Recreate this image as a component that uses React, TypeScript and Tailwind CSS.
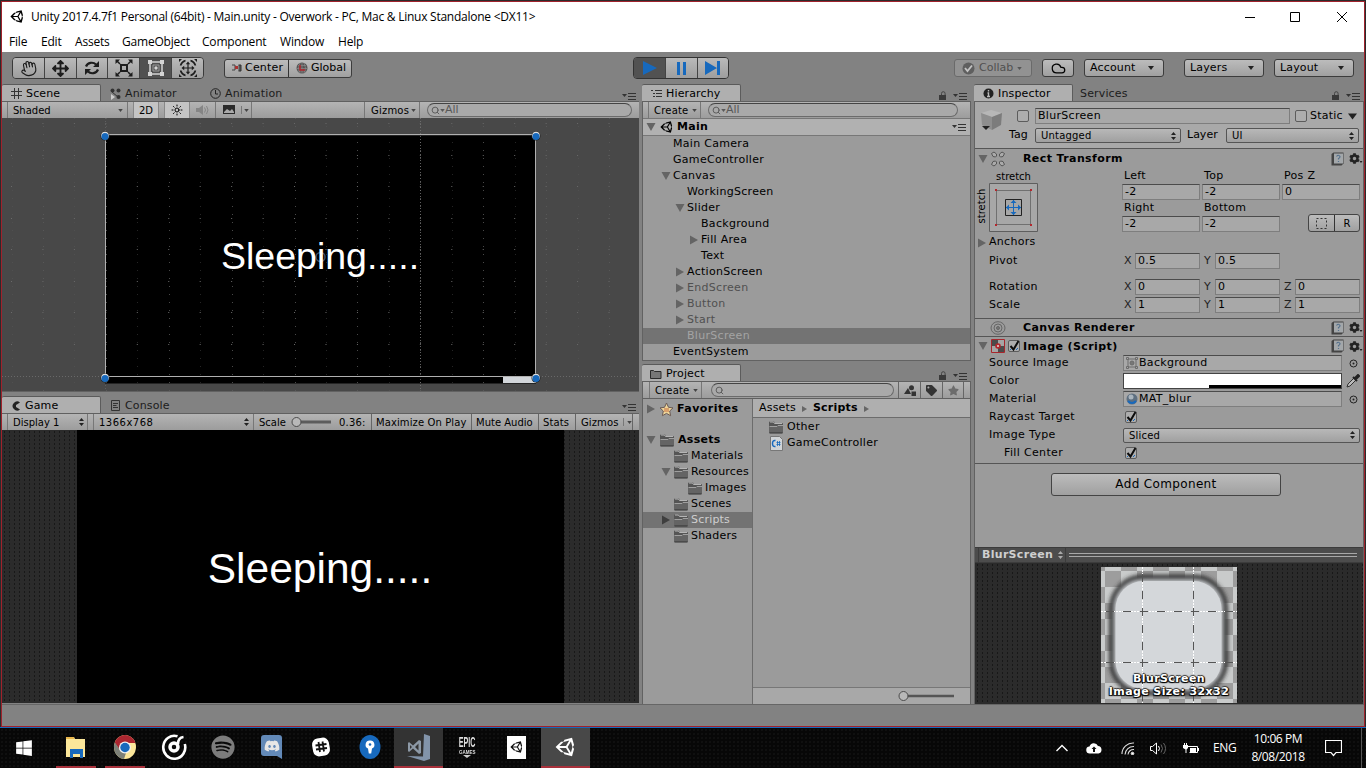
import type { ReactNode } from "react";
import { FaArrowsAlt, FaSpotify, FaDiscord, FaUnity, FaWindows, FaCog, FaTag, FaStar } from "react-icons/fa";
import { Hand, Search, Sun, Cloud } from "lucide-react";

/* ---------- shared pieces ---------- */

const Down = ({ c = "#222", s = 5 }: { c?: string; s?: number }) => (
  <svg width={s + 1} height={s - 1} viewBox="0 0 6 4" className="shrink-0"><path d="M0 0h6L3 4z" fill={c} /></svg>
);

const UpDown = ({ c = "#222" }: { c?: string }) => (
  <svg width="5" height="8" viewBox="0 0 5 8" className="shrink-0"><path d="M0 3L2.5 0 5 3zM0 5h5L2.5 8z" fill={c} /></svg>
);

const Menu = () => (
  <svg width="14" height="7" viewBox="0 0 14 7" className="shrink-0">
    <path d="M0 1h5L2.500 4z" fill="#333" />
    <path d="M6 .5h8M6 3.500h8M6 6.500h8" stroke="#333" />
  </svg>
);

const Lock = () => (
  <svg width="8" height="9" viewBox="0 0 8 9" className="shrink-0">
    <path d="M2.500 4V2.500a1.800 1.800 0 0 1 3.600 0V4" fill="none" stroke="#444" />
    <path d="M0 4h7v5H0z" fill="#3a3a3a" />
  </svg>
);

const Fold = ({ open, dark }: { open?: boolean; dark?: boolean }) => (
  <svg width="10" height="10" viewBox="0 0 10 10" className="shrink-0">
    <path d={open ? "M.5 1h9L5 9z" : "M1 .5v9l8-4.500z"} fill={dark ? "#3f3f3f" : "#646464"} />
  </svg>
);

const Folder = () => (
  <svg width="16" height="14" viewBox="0 0 16 14" className="shrink-0">
    <path d="M1 2.500q0-1 1-1h4l1 1.500h7q1 0 1 1V12q0 1-1 1H2q-1 0-1-1z" fill="#555" />
    <path d="M2 2h3.500l1 1.500H14" fill="none" stroke="#b5b5b5" />
    <path d="M1 6.500h8l1-1h5V12q0 1-1 1H2q-1 0-1-1z" fill="#646464" />
    <path d="M1.500 6.500h7.500l1-1h5" fill="none" stroke="#a0a0a0" />
    <path d="M1.500 13h13" stroke="#333" />
  </svg>
);

const Tab = ({ w, icon, label, active }: { w: string; icon?: ReactNode; label: string; active?: boolean }) => (
  <div className={`flex h-[17px] items-center gap-[4px] ${w} ${active ? "rounded-t-[2px] border-t border-r border-t-[#5a5a5a] border-r-[#5c5c5c] bg-[#afafaf] pt-px text-black" : "pt-[2px] text-[#1c1c1c]"}`}>
    {icon}
    <span className="pt-px text-[11px] tracking-[0.15px] whitespace-nowrap">{label}</span>
  </div>
);

const bar = "flex items-center border-t border-[#606060] bg-linear-to-b from-[#b4b4b4] to-[#9c9c9c] text-[10px]";
const btn = "flex items-center border border-[#3c3c3c] bg-linear-to-b from-[#bcbcbc] to-[#a0a0a0]";

const SearchBox = ({ w, text }: { w: string; text?: string }) => (
  <div className={`flex h-[14px] items-center rounded-full border border-[#6b6b6b] border-t-[#444] bg-[#a9a9a9] pl-[3px] text-[#585858] ${w}`}>
    <Search size={9} strokeWidth={2.500} />
    {text && <Down c="#585858" s={4} />}
    {text && <span className="-mt-px text-[11px] leading-[12px]">{text}</span>}
  </div>
);

/* ---------- title, menu, toolbar ---------- */

const Title = () => (
  <div className="flex h-[29px] items-center bg-white pl-[8px] font-['Open_Sans','Noto_Sans',sans-serif] text-[12px] text-black">
    <FaUnity size={15} />
    <span className="ml-[6px] w-[506px] whitespace-nowrap tracking-[-0.25px]">Unity 2017.4.7f1 Personal (64bit) - Main.unity - Overwork - PC, Mac &amp; Linux Standalone &lt;DX11&gt;</span>
    <svg width="104" height="12" viewBox="0 0 104 12" className="mr-[15px] ml-auto" fill="none" stroke="#000">
      <path d="M0 6.500h10M45.500 1.500h9v9h-9zM92 1l10 10M102 1L92 11" />
    </svg>
  </div>
);

const menuItems: [string, string][] = [
  ["File", "w-[32px]"], ["Edit", "w-[34px]"], ["Assets", "w-[47px]"], ["GameObject", "w-[80px]"],
  ["Component", "w-[78px]"], ["Window", "w-[58px]"], ["Help", "w-[40px]"],
];

const MenuBar = () => (
  <div className="flex h-[21px] items-center bg-white pl-[7px] font-['Open_Sans','Noto_Sans',sans-serif] text-[12px] tracking-[-0.2px] text-black">
    {menuItems.map(([m, w]) => <span key={m} className={w}>{m}</span>)}
  </div>
);

const tools: ReactNode[] = [
  <Hand size={17} strokeWidth={1.600} className="-rotate-12" />,
  <FaArrowsAlt size={17} />,
  <svg width="18" height="16" viewBox="0 0 18 16"><path d="M3 6.500C4.500 2.500 10 1.500 13 4.500M15 9.500C13.500 13.500 8 14.500 5 11.500" fill="none" stroke="currentColor" strokeWidth="2.200" /><path d="M16 1v6h-6zM2 15V9h6z" fill="currentColor" /></svg>,
  <svg width="18" height="18" viewBox="0 0 18 18" fill="none" stroke="currentColor"><rect x="6" y="6" width="6" height="6" strokeWidth="2" /><path d="M5 5L2 2M13 5l3-3M5 13l-3 3M13 13l3 3" strokeWidth="1.500" /><path d="M.5 5V.5H5zM13 .5h4.500V5zM.5 13v4.500H5zM17.500 13v4.500H13z" fill="currentColor" stroke="none" /></svg>,
  <svg width="18" height="18" viewBox="0 0 18 18" fill="none" stroke="#d4d4d4" strokeWidth="1.500"><path d="M3 3h12v12H3z" /><circle cx="9" cy="9" r="1.700" fill="#d4d4d4" stroke="none" /><path d="M6 6h6v6H6z" strokeWidth="1" stroke="#9c9c9c" /><path d="M1 1h4v4H1zM13 1h4v4h-4zM1 13h4v4H1zM13 13h4v4h-4z" fill="#d4d4d4" stroke="none" /></svg>,
  <svg width="20" height="20" viewBox="0 0 20 20" fill="none" stroke="currentColor"><path d="M10 5v10M5 10h10" strokeWidth="1.200" /><path d="M10 3.500l2.200 2.700H7.800zM10 16.500l2.200-2.700H7.800zM3.500 10l2.700-2.200v4.400zM16.500 10l-2.700-2.200v4.400z" fill="currentColor" stroke="none" /><path d="M2.500 7.500a8 8 0 0 1 5-5M12.500 2.500a8 8 0 0 1 5 5M17.500 12.500a8 8 0 0 1-5 5M7.500 17.500a8 8 0 0 1-5-5" strokeWidth="1.600" /><path d="M1 1h3L1 4zM19 1v3l-3-3zM1 19v-3l3 3zM19 19h-3l3-3z" fill="currentColor" stroke="none" /></svg>,
];

const DropBtn = ({ label, w }: { label: string; w: string }) => (
  <div className={`${btn} h-[18px] justify-between rounded-[3px] pr-[9px] pl-[5px] ${w}`}>
    <span className="pt-px tracking-[0.15px]">{label}</span><Down />
  </div>
);

const Toolbar = () => (
  <div className="flex h-[32px] items-center bg-[#828282] pl-[10px] text-[11px] text-black">
    <div className="flex h-[22px] w-[192px] overflow-hidden rounded-[4px] border border-[#3a3a3a] text-[#1d1d1d]">
      {tools.map((t, i) => (
        <div key={i} className={`flex flex-1 items-center justify-center ${i ? "border-l border-[#444]" : ""} ${i === 4 ? "bg-[#515151]" : "bg-linear-to-b from-[#bababa] to-[#9e9e9e]"}`}>{t}</div>
      ))}
    </div>
    <div className={`${btn} ml-[20px] h-[19px] w-[128px] rounded-[3px]`}>
      <div className="flex h-full w-[64px] items-center gap-[3px] border-r border-[#333] pl-[7px]">
        <svg width="10" height="8" viewBox="0 0 10 8"><path d="M0 1h3v5H0M4 3.500h2" fill="none" stroke="#444" /><path d="M3 2h3v3H3z" fill="#a33" /><path d="M6.500 1H9v6H6.500" fill="#555" stroke="#333" /></svg>
        <span className="pt-px tracking-[0.2px]">Center</span>
      </div>
      <div className="flex items-center gap-[3px] pl-[7px]">
        <svg width="12" height="12" viewBox="0 0 12 12"><circle cx="6" cy="6" r="5.500" fill="#555" /><path d="M2 3.500h8M1 6.500h10M2 9h8M6 .5v11M4 1q-3 5 0 10M8 1q3 5 0 10" fill="none" stroke="#8b8b8b" strokeWidth=".7" /><path d="M4 3v5h5" fill="none" stroke="#b3272d" strokeWidth="1.500" /></svg>
        <span className="pt-px">Global</span>
      </div>
    </div>
    <div className="ml-[281px] flex h-[22px] w-[96px] overflow-hidden rounded-[4px] border border-[#333]">
      <div className="flex w-[31px] items-center justify-center bg-[#525252]"><svg width="16" height="14" viewBox="0 0 16 14"><path d="M1 0l14 7-14 7z" fill="#1769bd" /></svg></div>
      <div className="flex w-[32px] items-center justify-center border-l border-[#444] bg-linear-to-b from-[#bababa] to-[#9e9e9e]"><svg width="9" height="13" viewBox="0 0 9 13"><path d="M0 0h3v13H0zM6 0h3v13H6z" fill="#1769bd" /></svg></div>
      <div className="flex flex-1 items-center justify-center border-l border-[#444] bg-linear-to-b from-[#bababa] to-[#9e9e9e]"><svg width="16" height="14" viewBox="0 0 16 14"><path d="M0 0l12 7-12 7zM12 0h3v14h-3z" fill="#1769bd" /></svg></div>
    </div>
    <div className="ml-[225px] flex h-[18px] w-[78px] items-center gap-[4px] rounded-[3px] border border-[#6a6a6a] bg-[#929292] pl-[7px] text-[#505050]">
      <svg width="13" height="13" viewBox="0 0 13 13"><circle cx="6.500" cy="6.500" r="6" fill="#5f5f5f" /><path d="M3 6l2.500 3L10 3.500" fill="none" stroke="#c4c4c4" strokeWidth="1.800" /></svg>
      <span className="pt-px">Collab</span><Down c="#555" s={4} />
    </div>
    <div className={`${btn} ml-[10px] h-[18px] w-[32px] justify-center rounded-[3px]`}><Cloud size={15} strokeWidth={2} /></div>
    <div className="w-[10px]" /><DropBtn label="Account" w="w-[80px]" />
    <div className="w-[20px]" /><DropBtn label="Layers" w="w-[80px]" />
    <div className="w-[10px]" /><DropBtn label="Layout" w="w-[80px]" />
  </div>
);

/* ---------- scene and game ---------- */

const cols = Array.from({ length: 20 }, (_, i) => 9.500 + i * 31.450);
const rows = [5, 37, 68, 100, 131, 163, 194, 226];

const Handle = ({ x, y }: { x: number; y: number }) => (
  <g><circle cx={x} cy={y} r="4.500" fill="#222" /><circle cx={x} cy={y - 0.500} r="3.800" fill="#ddd" /><circle cx={x} cy={y + 0.500} r="3.500" fill="#1769bd" /></g>
);

const SceneView = () => (
  <div className="relative h-[273px] bg-[#484848]">
    <svg width="636" height="273" viewBox="0 0 636 273" className="block">
      <path d="M103 17.500h431v248H103z" fill="#000" />
      <g stroke="#5c5c5c" strokeDasharray="1 7">
        {cols.map((x, i) => <path key={i} d={`M${Math.round(x) + 0.500} 0v273`} opacity={i % 2 ? 0.8 : 0.4} />)}
      </g>
      <g stroke="#6a6a6a" strokeDasharray="1 30.450">
        {rows.map((y) => <path key={y} d={`M9 ${y + 0.500}h627`} />)}
      </g>
      <g stroke="#777" strokeDasharray="1 2">
        <path d="M418.500 0v273" opacity=".8" /><path d="M103.500 0v273" opacity=".5" /><path d="M0 258.500h636" opacity=".7" />
      </g>
      <path d="M501 259h33v6h-33z" fill="#d2d6da" />
      <path d="M103.500 16.500h430v242h-430z" fill="none" stroke="#b0b0b0" />
      <Handle x={103} y={18} /><Handle x={534} y={18} /><Handle x={103} y={260} /><Handle x={534} y={260} />
      <circle cx="318.500" cy="139" r="4.500" fill="none" stroke="#5c7fa6" strokeWidth="1.500" opacity=".6" />
    </svg>
    <span className="absolute top-[117px] left-[219px] font-['Liberation_Sans',Arial,sans-serif] text-[37.500px] leading-[42px] whitespace-nowrap text-white">Sleeping.....</span>
  </div>
);

const dark = "bg-[#2b2b2b] bg-[radial-gradient(#101010_0.5px,transparent_0.9px)] bg-[length:5px_4px]";

const Left = () => (
  <div className="flex w-[637px] shrink-0 flex-col">
    <div className="flex h-[17px] items-end">
      <Tab active w="w-[99px] pl-[9px]" label="Scene" icon={<svg width="11" height="11" viewBox="0 0 11 11"><path d="M3.500 0v11M7.500 0v11M0 3.500h11M0 7.500h11" stroke="#333" /></svg>} />
      <Tab w="w-[99px] pl-[9px]" label="Animator" icon={<svg width="11" height="12" viewBox="0 0 11 12" fill="#333"><circle cx="2.500" cy="2.500" r="2" /><circle cx="8.500" cy="2.500" r="2" /><path d="M2 4l6 5" stroke="#333" /><circle cx="8.500" cy="9" r="2" /><path d="M1 6v6l4-3z" fill="#ccc" /></svg>} />
      <Tab w="w-[100px] pl-[10px]" label="Animation" icon={<svg width="11" height="11" viewBox="0 0 11 11" fill="none" stroke="#222"><circle cx="5.500" cy="5.500" r="4.800" /><path d="M5.500 2v4H8" /></svg>} />
      <div className="mr-[3px] mb-[1px] ml-auto"><Menu /></div>
    </div>
    <div className={`${bar} h-[17px] text-black`}>
      <div className="ml-[5px] flex h-full w-[121px] items-center justify-between border-x border-[#777] pr-[4px] pl-[5px]"><span>Shaded</span><Down c="#444" s={4} /></div>
      <div className="ml-[5px] flex h-full w-[26px] items-center justify-center border-x border-[#888] bg-[#c4c4c4]">2D</div>
      <div className="ml-[5px] flex h-full w-[26px] items-center justify-center border-x border-[#888] bg-[#c4c4c4]"><Sun size={12} strokeWidth={2} /></div>
      <div className="flex h-full w-[26px] items-center justify-center border-r border-[#777]">
        <svg width="14" height="10" viewBox="0 0 14 10"><path d="M0 3h3l4-3v10L3 7H0z" fill="#858585" /><path d="M8.500 2.500q2 2.500 0 5M10.500 1q3 4 0 8" fill="none" stroke="#858585" /></svg>
      </div>
      <div className="flex h-full w-[36px] items-center gap-[5px] border-r border-[#777] pl-[7px]">
        <svg width="13" height="10" viewBox="0 0 13 10" className="shrink-0"><path d="M0 0h12v9H0z" fill="#2a2a2a" /><path d="M1 7l3-3 3 2 2-2 2 3v1H1z" fill="#aaa" /></svg>
        <i className="h-[8px] w-px bg-[#777]" /><span className="-ml-[3px] flex"><Down c="#444" s={4} /></span>
      </div>
      <div className="ml-[112px] flex h-full w-[55px] items-center justify-between border-l border-[#777] pr-[3px] pl-[6px]"><span className="tracking-[0.2px]">Gizmos</span><Down c="#444" s={4} /></div>
      <i className="mr-[7px] h-full w-px bg-[#777]" />
      <SearchBox w="w-[205px]" text="All" />
    </div>
    <SceneView />
    <div className="h-[5px] border-t border-[#626262]" />
    <div className="flex h-[17px] items-end">
      <Tab active w="w-[99px] pl-[9px]" label="Game" icon={<svg width="10" height="10" viewBox="0 0 10 10"><path d="M9 1.500A4.500 4.500 0 1 0 9 8.500L5 6V4z" fill="#222" /></svg>} />
      <Tab w="w-[99px] pl-[10px]" label="Console" icon={<svg width="10" height="11" viewBox="0 0 10 11" fill="none" stroke="#333"><path d="M.5.5h8v10h-8zM2 3.500h5M2 5.500h3.500M2 7.500h5" /></svg>} />
      <div className="mr-[3px] mb-[2px] ml-auto"><Menu /></div>
    </div>
    <div className={`${bar} h-[17px] text-black`}>
      <div className="ml-[5px] flex h-full w-[81px] items-center justify-between border-x border-[#777] pr-[3px] pl-[5px]"><span>Display 1</span><UpDown /></div>
      <div className="ml-[5px] flex h-full w-[161px] items-center justify-between border-x border-[#777] pr-[4px] pl-[5px]"><span className="tracking-[0.5px]">1366x768</span><UpDown /></div>
      <span className="ml-[5px] w-[32px]">Scale</span>
      <svg width="42" height="12" viewBox="0 0 42 12"><path d="M6 6h34" stroke="#5c5c5c" strokeWidth="3" /><circle cx="5.500" cy="6" r="4.500" fill="#b8b8b8" stroke="#4b4b4b" /></svg>
      <span className="ml-[6px] w-[32px] tracking-[0.2px]">0.36:</span>
      <div className="flex h-full w-[100px] items-center border-l border-[#666] pl-[4px] tracking-[0.1px] whitespace-nowrap">Maximize On Play</div>
      <div className="flex h-full w-[67px] items-center border-l border-[#666] pl-[4px] whitespace-nowrap">Mute Audio</div>
      <div className="flex h-full w-[37px] items-center border-l border-[#666] pl-[4px] tracking-[0.1px]">Stats</div>
      <div className="flex h-full w-[58px] items-center border-x border-[#666] pl-[5px] tracking-[0.1px]">Gizmos<i className="mr-[3px] ml-[5px] h-[8px] w-px bg-[#777]" /><Down c="#444" s={4} /></div>
    </div>
    <div className={`flex h-[273px] justify-center ${dark}`}>
      <div className="mr-px flex w-[487px] items-center justify-center bg-black pt-[4px] font-['Liberation_Sans',Arial,sans-serif] text-[42.500px] text-white">Sleeping.....</div>
    </div>
  </div>
);

/* ---------- hierarchy and project ---------- */

type Node = { n: string; p: string; f?: "open" | "shut"; c?: string };
const nodes: Node[] = [
  { n: "Main Camera", p: "pl-[15px]" },
  { n: "GameController", p: "pl-[15px]" },
  { n: "Canvas", p: "pl-[15px]", f: "open" },
  { n: "WorkingScreen", p: "pl-[29px]" },
  { n: "Slider", p: "pl-[29px]", f: "open" },
  { n: "Background", p: "pl-[43px]" },
  { n: "Fill Area", p: "pl-[43px]", f: "shut" },
  { n: "Text", p: "pl-[43px]" },
  { n: "ActionScreen", p: "pl-[29px]", f: "shut" },
  { n: "EndScreen", p: "pl-[29px]", f: "shut", c: "text-[#505050]" },
  { n: "Button", p: "pl-[29px]", f: "shut", c: "text-[#505050]" },
  { n: "Start", p: "pl-[29px]", f: "shut", c: "text-[#505050]" },
  { n: "BlurScreen", p: "pl-[29px]", c: "bg-[#737373] text-[#a4a4a4]" },
  { n: "EventSystem", p: "pl-[15px]" },
];

const folders: Node[] = [
  { n: "Materials", p: "pl-[15px]" },
  { n: "Resources", p: "pl-[15px]", f: "open" },
  { n: "Images", p: "pl-[29px]" },
  { n: "Scenes", p: "pl-[15px]" },
  { n: "Scripts", p: "pl-[15px]", f: "shut", c: "bg-[#737373] text-[#cfcfcf]" },
  { n: "Shaders", p: "pl-[15px]" },
];

const Middle = () => (
  <div className="ml-[3px] flex w-[329px] shrink-0 flex-col text-black">
    <div className="flex h-[17px] items-end">
      <Tab active w="w-[99px] pl-[9px]" label="Hierarchy" icon={<svg width="11" height="9" viewBox="0 0 11 9"><path d="M0 1.500h2M4 1.500h7M2 4.500h2M5 4.500h6M2 7.500h2M5 7.500h6" stroke="#333" /></svg>} />
      <div className="mr-[4px] mb-[1px] ml-auto flex items-end gap-[6px]"><Lock /><Menu /></div>
    </div>
    <div className="flex h-[260px] flex-col border-x border-b border-[#626262] bg-[#9b9b9b]">
      <div className={`${bar} h-[17px]`}>
        <div className="ml-[5px] flex h-full w-[53px] items-center justify-between border-x border-[#777] pr-[3px] pl-[5px]"><span className="tracking-[0.2px]">Create</span><Down c="#444" s={4} /></div>
        <div className="w-[7px]" /><SearchBox w="w-[250px]" text="All" />
      </div>
      <div className="flex h-[18px] items-center border-y border-[#777] bg-[#b1b1b1] pl-[3px]">
        <Fold open /><FaUnity size={14} className="ml-[4px]" />
        <span className="ml-[3px] text-[11px] font-bold tracking-[0.3px]">Main</span>
        <div className="mr-[4px] ml-auto"><Menu /></div>
      </div>
      {nodes.map((r) => (
        <div key={r.n} className={`flex h-[16px] items-center text-[11px] tracking-[0.3px] ${r.p} ${r.c ?? ""}`}>
          <div className="w-[15px] pl-[3px]">{r.f && <Fold open={r.f === "open"} />}</div>{r.n}
        </div>
      ))}
    </div>
    <div className="mt-[3px] flex h-[17px] items-end">
      <Tab active w="w-[99px] pl-[8px]" label="Project" icon={<svg width="12" height="10" viewBox="0 0 12 10"><path d="M.5 1.500h3l1 1H11V9.500H.5z" fill="#777" stroke="#2c2c2c" /></svg>} />
      <div className="mr-[4px] mb-[1px] ml-auto flex items-end gap-[6px]"><Lock /><Menu /></div>
    </div>
    <div className="flex h-[323px] flex-col border-x border-[#626262] bg-[#9b9b9b]">
      <div className={`${bar} h-[18px] shrink-0 border-b`}>
        <div className="ml-[6px] flex h-full w-[53px] items-center justify-between border-x border-[#777] pr-[3px] pl-[5px]"><span className="tracking-[0.2px]">Create</span><Down c="#444" s={4} /></div>
        <div className="w-[9px]" /><SearchBox w="w-[183px]" />
        <div className="ml-[4px] flex h-full w-[22px] items-center justify-center border-l border-[#666]"><svg width="12" height="11" viewBox="0 0 12 11" fill="#333"><path d="M0 9l4-6 3 6z" /><circle cx="7.500" cy="2.800" r="2.500" /><path d="M7.500 6.500H12V11H7.500z" /></svg></div>
        <div className="flex h-full w-[22px] items-center justify-center border-l border-[#666]"><FaTag size={11} color="#333" /></div>
        <div className="flex h-full w-[22px] items-center justify-center border-x border-[#666]"><FaStar size={11} color="#6c6c6c" /></div>
      </div>
      <div className="flex flex-1 text-[11px]">
        <div className="w-[109px] overflow-hidden">
          <div className="flex h-[20px] items-center pl-[3px] font-bold tracking-[0.45px]"><Fold /><svg width="15" height="15" viewBox="0 0 15 15" className="mr-[3px] ml-[3px] shrink-0"><path d="M7.500 1l2 4.300 4.500.6-3.300 3.100.9 4.700-4.100-2.300-4.100 2.300.9-4.700L1 5.900l4.500-.6z" fill="#efd79b" stroke="#6a5a55" /><path d="M5 6h5v4H5z" fill="#c66a3c" opacity=".5" /></svg>Favorites</div>
          <div className="mt-[13px] flex h-[16px] items-center pl-[3px] font-bold tracking-[0.3px]"><Fold open /><span className="mr-[3px] ml-[3px]"><Folder /></span>Assets</div>
          {folders.map((r) => (
            <div key={r.n} className={`flex h-[16px] items-center tracking-[0.2px] ${r.p} ${r.c ?? ""}`}>
              <div className="w-[15px] shrink-0 pl-[3px]">{r.f && <Fold dark={r.n === "Scripts"} open={r.f === "open"} />}</div><Folder /><span className="ml-[2px]">{r.n}</span>
            </div>
          ))}
        </div>
        <div className="flex flex-1 flex-col border-l border-[#6c6c6c]">
          <div className="flex h-[19px] items-center border-b border-[#6c6c6c] bg-[#afafaf] pt-px pl-[6px] tracking-[0.2px]">
            <span className="w-[43px]">Assets</span><svg width="5" height="6"><path d="M0 0v6l5-3z" fill="#666" /></svg>
            <span className="mr-[6px] ml-[6px] font-bold">Scripts</span><svg width="5" height="6"><path d="M0 0v6l5-3z" fill="#666" /></svg>
          </div>
          <div className="mt-[1px] flex h-[16px] items-center gap-[3px] pl-[15px] tracking-[0.3px]"><Folder />Other</div>
          <div className="flex h-[16px] items-center pl-[17px]">
            <svg width="13" height="15" viewBox="0 0 13 15"><path d="M.5.5h9l3 3v11H.5z" fill="#d0d4d7" stroke="#777" /><path d="M5.500 4.500q-3-.5-3 3t3 3" fill="none" stroke="#1769bd" strokeWidth="1.500" /><path d="M7.500 5v5M9.500 5v5M6.500 6.500h4M6.500 8.500h4" stroke="#1769bd" strokeWidth=".8" /></svg>
            <span className="ml-[4px] tracking-[0.3px]">GameController</span>
          </div>
          <div className="mt-auto flex h-[17px] items-center justify-end border-t border-[#777] bg-[#a8a8a8] pr-[15px]">
            <svg width="57" height="12" viewBox="0 0 57 12"><path d="M6 6h50" stroke="#555" strokeWidth="2.500" /><circle cx="5.500" cy="6" r="4.500" fill="#b8b8b8" stroke="#4b4b4b" /></svg>
          </div>
        </div>
      </div>
    </div>
  </div>
);

/* ---------- inspector ---------- */

const fieldCls = "flex h-[16px] items-center border border-[#7e7e7e] border-t-[#4b4b4b] bg-[#a8a8a8] pl-[2px]";
const Field = ({ v, l }: { v: string; l?: string }) => (
  <div className="flex h-[16px] w-[78px] items-center">
    {l && <span className="w-[13px] shrink-0 pl-[2px] text-[#222]">{l}</span>}
    <div className={`${fieldCls} flex-1 tracking-[0.2px]`}>{v}</div>
  </div>
);

const Select = ({ v, w }: { v: string; w: string }) => (
  <div className={`flex h-[15px] items-center justify-between rounded-[2px] border border-[#555] bg-linear-to-b from-[#b8b8b8] to-[#a0a0a0] pr-[4px] pl-[5px] text-[10px] tracking-[0.2px] ${w}`}><span>{v}</span><UpDown /></div>
);

const Check = ({ on }: { on?: boolean }) => (
  <svg width="12" height="12" viewBox="0 0 12 12" className="shrink-0 overflow-visible">
    <rect x=".5" y=".5" width="11" height="11" rx="1.500" fill="#adadad" stroke="#5c5c5c" />
    {on && <path d="M2.500 6l3 3.500L10.500 1" fill="none" stroke="#0c0c0c" strokeWidth="2" />}
    {on && <path d="M8 10l2-2M2 9l1 1" stroke="#1769bd" />}
  </svg>
);

const CompHead = ({ name, icon, open, check, h }: { name: string; icon: ReactNode; open?: boolean; check?: boolean; h: string }) => (
  <div className={`flex shrink-0 items-center border-t border-[#555] pl-[3px] ${h}`}>
    <div className="w-[11px]">{open && <Fold open />}</div>
    <div className="flex w-[19px] justify-center pr-[2px]">{icon}</div>
    <div className="w-[15px]">{check && <Check on />}</div>
    <span className="pt-[2px] text-[11px] font-bold tracking-[0.4px]">{name}</span>
    <svg width="13" height="14" viewBox="0 0 13 14" className="ml-auto"><path d="M.5 2l2-1.500h10v11l-2 2H.5z" fill="#444" /><path d="M3 1.500h9v10H3z" fill="#a3a7aa" /><path d="M5.500 4.500q2-2.500 3.500 0 0 1.500-1.500 2v1M7.500 9v1" fill="none" stroke="#54708c" strokeWidth="1.200" /></svg>
    <FaCog size={11} color="#222" className="ml-[5px]" /><span className="mt-[7px] -ml-px"><Down s={3} /></span>
  </div>
);

const Row = ({ label, indent, children }: { label: string; indent?: boolean; children?: ReactNode }) => (
  <div className="flex h-[18px] shrink-0 items-center pb-[2px]">
    <span className={`w-[148px] shrink-0 tracking-[0.35px] ${indent ? "pl-[29px]" : "pl-[14px]"}`}>{label}</span>{children}
  </div>
);

const Target = () => (
  <svg width="9" height="9" viewBox="0 0 9 9" className="ml-[7px]"><circle cx="4.500" cy="4.500" r="3.500" fill="none" stroke="#222" /><circle cx="4.500" cy="4.500" r="1" fill="#222" /></svg>
);

const Preview = () => (
  <div className={`flex flex-1 justify-center pt-[4px] ${dark}`}>
    <div className="relative h-[136px] w-[136px]">
      <svg width="136" height="136" viewBox="0 0 136 136">
        <defs>
          <pattern id="chk" width="32" height="32" patternUnits="userSpaceOnUse" x="4" y="4"><path d="M0 0h32v32H0z" fill="#c9cbcb" /><path d="M0 0h16v16H0zM16 16h16v16H16z" fill="#9d9d9d" /></pattern>
          <filter id="soft" x="-10%" y="-10%" width="120%" height="120%"><feGaussianBlur stdDeviation="2" /></filter>
        </defs>
        <path d="M0 0h136v136H0z" fill="url(#chk)" />
        <rect x="11" y="10.500" width="113" height="115" rx="31" fill="#d4d7da" stroke="#2a2a2a" strokeWidth="5.500" filter="url(#soft)" />
        <rect x="14.500" y="14" width="106" height="108" rx="28" fill="#d4d7da" />
        <g stroke="#fff"><path d="M41.500 0v136M92.500 0v136M0 44.500h136M0 95.500h136" strokeDasharray="2 1" /></g>
        <g stroke="#555" strokeDasharray="8 9"><path d="M41.500 7v129M92.500 7v129M5 44.500h131M5 95.500h131" /></g>
      </svg>
      <div className="absolute -inset-x-2 bottom-[5px] text-center text-[11px] leading-[13px] font-bold tracking-[0.4px] whitespace-nowrap text-white [text-shadow:1px_1px_1px_#000,-1px_1px_1px_#000,0_-1px_1px_#333,1px_0_1px_#000]">BlurScreen<br />Image Size: 32x32</div>
    </div>
  </div>
);

const Inspector = () => (
  <div className="ml-[3px] flex w-[390px] shrink-0 flex-col text-[11px] text-black">
    <div className="flex h-[17px] items-end">
      <Tab active w="w-[99px] pl-[9px]" label="Inspector" icon={<svg width="11" height="11" viewBox="0 0 11 11"><circle cx="5.500" cy="5.500" r="5" fill="#222" /><path d="M5.500 2v1.500M4.500 5h1v3.500M4 8.500h3" fill="none" stroke="#bbb" strokeWidth="1.400" /></svg>} />
      <Tab w="w-[100px] pl-[7px]" label="Services" />
      <div className="mr-[4px] mb-[1px] ml-auto flex items-end gap-[6px]"><Lock /><Menu /></div>
    </div>
    <div className="flex h-[603px] flex-col border-x border-t border-[#626262] bg-[#9b9b9b]">
      <div className="flex h-[46px] shrink-0 bg-[#a9a9a9] pt-[6px]">
        <svg width="23" height="23" viewBox="0 0 23 23" className="mt-[1px] ml-[5px]"><path d="M1 4l10-3 11 3-10 4z" fill="#b7b7b7" /><path d="M1 4l11 4v13L2 16z" fill="#8e8e8e" /><path d="M22 4L12 8v13l9-5z" fill="#7c7c7c" /><path d="M2 17h8l-4 4z" fill="#222" /></svg>
        <div className="flex flex-1 flex-col gap-[4px] pl-[5px]">
          <div className="flex h-[16px] items-center">
            <span className="ml-[9px]"><Check /></span>
            <div className={`${fieldCls} ml-[6px] w-[255px] tracking-[0.3px]`}>BlurScreen</div>
            <span className="ml-[5px]"><Check /></span><span className="ml-[3px] w-[38px] tracking-[0.2px]">Static</span><Down s={8} />
          </div>
          <div className="flex h-[15px] items-center">
            <span className="ml-[1px] w-[26px]">Tag</span><Select v="Untagged" w="w-[146px]" />
            <span className="ml-[6px] w-[39px]">Layer</span><Select v="UI" w="w-[133px]" />
          </div>
        </div>
      </div>
      <CompHead open name="Rect Transform" h="h-[20px]" icon={<svg width="16" height="16" viewBox="0 0 16 16" fill="#aaa" stroke="#555"><path d="M1.500 2.500l2.500-1.500 2.500 2v2l-1 1-2.500-.5zM14.500 2.500L12 1 9.500 3v2l1 1 2.500-.5zM1.500 13.500L4 15l2.500-2v-2l-1-1-2.500.5zM14.500 13.500L12 15l-2.500-2v-2l1-1 2.500.5z" /></svg>} />
      <div className="flex h-[65px] shrink-0">
        <div className="relative w-[147px]">
          <span className="absolute top-[1px] left-[21px] text-[10px]">stretch</span>
          <span className="absolute top-[31px] left-[-10px] -rotate-90 text-[10px] leading-[14px]">stretch</span>
          <svg width="49" height="49" viewBox="0 0 49 49" className="absolute top-[15px] left-[14px]">
            <path d="M.5.5h48v48H.5z" fill="#a7a7a7" stroke="#5e5e5e" /><path d="M7.500 7.500h34v34h-34z" fill="none" stroke="#707070" />
            <path d="M16.500 16.500h16v16h-16z" fill="none" stroke="#222" />
            <path d="M6 6h2v2H6zM41 6h2v2h-2zM6 41h2v2H6zM41 41h2v2h-2z" fill="#b3272d" />
            <path d="M24.500 17v15M17 24.500h15" stroke="#1769bd" /><path d="M24.500 17l3 3h-6zM24.500 32l3-3h-6zM17 24.500l3-3v6zM32 24.500l-3-3v6z" fill="#1769bd" />
          </svg>
        </div>
        <div className="grid w-[240px] grid-cols-[80px_80px_80px] grid-rows-[16px_16px_16px_16px] [&>span]:pl-[2px] [&>span]:leading-[16px] [&>span]:tracking-[0.3px]">
          <span>Left</span><span>Top</span><span>Pos Z</span>
          <Field v="-2" /><Field v="-2" /><Field v="0" />
          <span>Right</span><span>Bottom</span><span />
          <Field v="-2" /><Field v="-2" />
          <div className="-mt-[2px] ml-[26px] flex h-[18px] w-[52px] items-center rounded-[3px] border border-[#444] bg-linear-to-b from-[#bcbcbc] to-[#a0a0a0]">
            <div className="flex h-full w-[26px] items-center justify-center border-r border-[#333]"><svg width="11" height="11"><path d="M.5.5h10v10H.5z" fill="none" stroke="#333" strokeDasharray="2 2" /></svg></div>
            <span className="flex-1 text-center text-[10px]">R</span>
          </div>
        </div>
      </div>
      <div className="flex h-[20px] shrink-0 items-center pb-px pl-[2px]"><Fold /><span className="ml-[2px] pb-px tracking-[0.3px]">Anchors</span></div>
      <Row label="Pivot"><div className="-ml-px flex gap-[2px]"><Field l="X" v="0.5" /><Field l="Y" v="0.5" /></div></Row>
      <div className="h-[8px] shrink-0" />
      <Row label="Rotation"><div className="-ml-px flex gap-[2px]"><Field l="X" v="0" /><Field l="Y" v="0" /><Field l="Z" v="0" /></div></Row>
      <Row label="Scale"><div className="-ml-px flex gap-[2px]"><Field l="X" v="1" /><Field l="Y" v="1" /><Field l="Z" v="1" /></div></Row>
      <div className="h-[3px] shrink-0" />
      <CompHead name="Canvas Renderer" h="h-[18px]" icon={<svg width="16" height="14" viewBox="0 0 16 14" fill="none" stroke="#666"><ellipse cx="8" cy="7" rx="7" ry="6.300" /><circle cx="8" cy="7" r="4" /><circle cx="8" cy="7" r="1.500" fill="#777" /></svg>} />
      <CompHead open check name="Image (Script)" h="h-[19px]" icon={<svg width="14" height="14" viewBox="0 0 14 14"><path d="M.5.5h13v13H.5z" fill="#a5a5a5" stroke="#a8262c" /><path d="M1 1h6v6H1zM7 7h6v6H7z" fill="#4b4b4b" /><circle cx="7" cy="7" r="2.800" fill="#b3272d" /><circle cx="7" cy="7" r="1" fill="#ddd" /></svg>} />
      <Row label="Source Image"><div className={`${fieldCls} w-[219px] tracking-[0.3px]`}><svg width="12" height="12" viewBox="0 0 12 12" className="mr-[1px]" fill="none" stroke="#6c6c6c"><path d="M2 2h8v8H2z" /><circle cx="6" cy="6" r="2" fill="#777" /><path d="M.5.5h2v2h-2zM9.500.5h2v2h-2zM.5 9.500h2v2h-2zM9.500 9.500h2v2h-2z" /></svg>Background</div><Target /></Row>
      <Row label="Color">
        <div className="flex h-[16px] w-[219px] flex-col border border-[#444] bg-white"><div className="mt-auto ml-auto h-[3px] w-[132px] bg-black" /></div>
        <svg width="14" height="14" viewBox="0 0 14 14" className="ml-[4px]"><path d="M1 13l1-3 6-6 2 2-6 6z" fill="#bbb" stroke="#333" /><path d="M7 3l4 4M9 4l3-3 1 1-3 3z" stroke="#222" strokeWidth="2" /></svg>
      </Row>
      <Row label="Material"><div className={`${fieldCls} w-[219px] tracking-[0.3px]`}><svg width="12" height="12" viewBox="0 0 12 12" className="mr-[1px]"><circle cx="6" cy="6" r="5.500" fill="#5e6f80" /><circle cx="5" cy="4" r="2.500" fill="#a9b4bd" /><path d="M2 8q4 4 8 0" stroke="#1769bd" strokeWidth="2" fill="none" /></svg>MAT_blur</div><Target /></Row>
      <Row label="Raycast Target"><span className="ml-[2px]"><Check on /></span></Row>
      <Row label="Image Type"><Select v="Sliced" w="w-[237px]" /></Row>
      <Row label="Fill Center" indent><span className="ml-[2px]"><Check on /></span></Row>
      <div className="border-t border-[#555]" />
      <div className="mt-[9px] ml-[76px] flex h-[23px] w-[230px] shrink-0 items-center justify-center rounded-[3px] border border-[#444] bg-linear-to-b from-[#bcbcbc] to-[#a0a0a0] pb-px text-[12px] tracking-[0.35px]">Add Component</div>
      <div className="mt-auto flex h-[157px] shrink-0 flex-col">
        <div className="flex h-[16px] items-center border-y border-[#3c3c3c] bg-[#4c4c4c] text-[#cfcfcf]">
          <div className="ml-[3px] flex h-full w-[88px] items-center gap-[5px] border-x border-[#3c3c3c] pl-[3px] text-[11px] font-bold tracking-[0.3px]">BlurScreen<UpDown c="#aaa" /></div>
          <div className="mr-[6px] ml-[3px] h-[4px] flex-1 border-y border-[#a8a8a8]" />
        </div>
        <Preview />
      </div>
    </div>
  </div>
);

/* ---------- taskbar ---------- */

const apps: { icon: ReactNode; cls?: string; line?: boolean }[] = [
  { icon: <svg width="22" height="22" viewBox="0 0 22 22"><path d="M1 1h8l1 2h10v18H1z" fill="#fce79a" /><path d="M1 1h8v2H1z" fill="#e8b64c" /><path d="M5 22v-9h13v9h-3v-4H8v4z" fill="#1769bd" /></svg>, line: true },
  { icon: <svg width="22" height="24" viewBox="0 0 22 24"><clipPath id="cr"><ellipse cx="11" cy="12" rx="11" ry="12" /></clipPath><g clipPath="url(#cr)"><path d="M0 0h22v24H0z" fill="#fce79a" /><path d="M0 0h22v8H11L5 14 0 7z" fill="#ab2630" /><path d="M0 6l6 9 6 3-2 6H0z" fill="#7c8078" /><circle cx="11" cy="12.500" r="6" fill="#f1f1f1" /><circle cx="11" cy="12.500" r="4.700" fill="#1769bd" /></g></svg>, line: true },
  { icon: <svg width="26" height="28" viewBox="0 0 26 28" fill="none" stroke="#fff"><path d="M16.500 3.300A11 11.500 0 1 0 23.800 11" strokeWidth="2.600" /><circle cx="13" cy="14" r="4" strokeWidth="3.500" /><path d="M17 11c0-4 1-6.500 5.500-7" strokeWidth="2.600" /></svg> },
  { icon: <FaSpotify size={24} color="#7c7c7c" /> },
  { icon: <svg width="22" height="24" viewBox="0 0 22 24"><path d="M3 0h15q3 0 3 3v21l-5-3H3q-3 0-3-3V3q0-3 3-3z" fill="#6289b8" /><g transform="translate(3 3)"><FaDiscord size={16} color="#e6e6e6" /></g></svg> },
  { icon: <svg width="20" height="22" viewBox="0 0 20 22"><rect x="1.500" y="2" width="17" height="18" rx="6" fill="#fff" transform="rotate(-10 10 11)" /><path d="M7.500 6l1.500 10M11.500 5.500l1.500 10M4.500 9.500l11-1.500M5 13.500l11-1.500" stroke="#111" strokeWidth="1.800" /></svg> },
  { icon: <svg width="22" height="24" viewBox="0 0 22 24"><ellipse cx="11" cy="12" rx="10.500" ry="12" fill="#1769bd" /><path d="M11 5.500a4.200 4.200 0 0 1 2 8l-.8 5h-2.400l-.8-5a4.200 4.200 0 0 1 2-8z" fill="#fff" /><circle cx="11" cy="9.500" r="1.300" fill="#1769bd" /></svg> },
  { icon: <svg width="24" height="27" viewBox="0 0 24 27"><path d="M17 0l6 2v23l-6 2L0 22l16 .5z" fill="#8294aa" /><path d="M2 8l4 3.500L12 6l2 1v12l-2 1-6-5.500L2 18l-1-1V9zM3 11v4l2-2zM11.500 9.500L8 13l3.500 3.500z" fill="#8d99a6" fillRule="evenodd" /></svg>, cls: "bg-[#333]", line: true },
  { icon: <div className="flex flex-col items-center pr-px font-['Liberation_Sans_Narrow','Liberation_Sans',sans-serif] font-bold text-[#ddd]"><span className="scale-x-[0.55] scale-y-110 text-[13px] leading-[13px]">EPIC</span><span className="scale-x-90 text-[5px] leading-[6px]">GAMES</span><svg width="8" height="3"><path d="M0 0h8L4 3z" fill="#ccc" /></svg></div> },
  { icon: <div className="flex h-[23px] w-[19px] items-center justify-center bg-white"><FaUnity size={14} color="#111" /></div> },
  { icon: <FaUnity size={22} color="#fff" />, cls: "bg-[#484848]", line: true },
];

const Taskbar = () => (
  <div className="flex h-[40px] shrink-0 items-stretch bg-[#070707] bg-[radial-gradient(#222_0.5px,transparent_0.8px)] bg-[length:4px_4px] font-['Open_Sans','Noto_Sans',sans-serif] text-[12px] text-white">
    <div className="flex w-[51px] items-center justify-center pr-[3px]"><FaWindows size={18} /></div>
    {apps.map((a, i) => (
      <div key={i} className={`flex w-[49px] flex-col items-center ${a.cls ?? ""}`}>
        <div className="flex flex-1 items-center justify-center">{a.icon}</div>
        <div className={`h-[2px] ${a.line ? "bg-[#a8313b]" : ""} ${a.cls ? "w-full" : "w-[40px]"}`} />
      </div>
    ))}
    <div className="ml-auto flex items-center">
      <svg width="12" height="8" viewBox="0 0 12 8" className="mr-[18px]"><path d="M.5 7L6 1.500 11.500 7" fill="none" stroke="#fff" strokeWidth="1.400" /></svg>
      <svg width="16" height="12" viewBox="0 0 16 12" className="mr-[19px]"><path d="M4 11.500a3.500 3.500 0 0 1-.5-7A4.500 4.500 0 0 1 12 4a3.800 3.800 0 0 1 .5 7.500z" fill="#fff" /><path d="M8 4.500L10.500 7H9v3H7V7H5.500z" fill="#111" /></svg>
      <svg width="14" height="13" viewBox="0 0 14 13" className="mr-[15px]" fill="none" stroke="#ddd"><path d="M1 12A11 11 0 0 1 13 1M4 12.500a8.500 8.500 0 0 1 9-8M7 12.500a5.500 5.500 0 0 1 6-5" strokeWidth="1.100" /><circle cx="11.500" cy="11.500" r="1.300" fill="#fff" /></svg>
      <svg width="17" height="13" viewBox="0 0 17 13" className="mr-[16px]" fill="none" stroke="#fff"><path d="M.5 4.500h2l4-3.500v11l-4-3.500h-2z" /><path d="M8.500 4q2 2.500 0 5" /><path d="M11 2.500q3 4 0 8M13.500 1q4 5.500 0 11" stroke="#666" /></svg>
      <svg width="16" height="13" viewBox="0 0 16 13" className="mr-[14px]"><path d="M4.500 4.500h10v6h-8" fill="none" stroke="#fff" /><path d="M7 6h6v4H7zM15 6h1v3h-1zM0 3h5v3L3.500 7.500V11h-1V7.500L0 6zM1 1h1v2H1zM3 1h1v2H3z" fill="#fff" /></svg>
      <span className="w-[25px] tracking-[-0.3px]">ENG</span>
      <div className="ml-[13px] w-[54px] text-center text-[12px] leading-[18px] tracking-[-0.4px] whitespace-nowrap">10:06 PM<br />8/08/2018</div>
      <svg width="17" height="17" viewBox="0 0 17 17" className="mr-[19px] ml-[20px]"><path d="M.5.5h16v12H11L8.500 15.500 6 12.500H.5z" fill="none" stroke="#fff" strokeWidth="1.200" /></svg>
      <div className="mr-[4px] h-[40px] w-px bg-[#555]" />
    </div>
  </div>
);

export default function App() {
  return (
    <div className="flex h-[768px] w-[1366px] flex-col overflow-hidden bg-[#2b2b2b] font-['DejaVu_Sans',Verdana,sans-serif]">
      <div className="h-px shrink-0" />
      <div className="mx-px flex h-[726px] shrink-0 flex-col border border-[#a0222c] bg-[#828282]">
        <Title />
        <MenuBar />
        <Toolbar />
        <div className="flex h-[620px]">
          <Left />
          <Middle />
          <Inspector />
        </div>
        <div className="flex-1 border-t border-[#666]" />
      </div>
      <div className="h-px shrink-0 bg-[#1769bd]" />
      <Taskbar />
    </div>
  );
}
